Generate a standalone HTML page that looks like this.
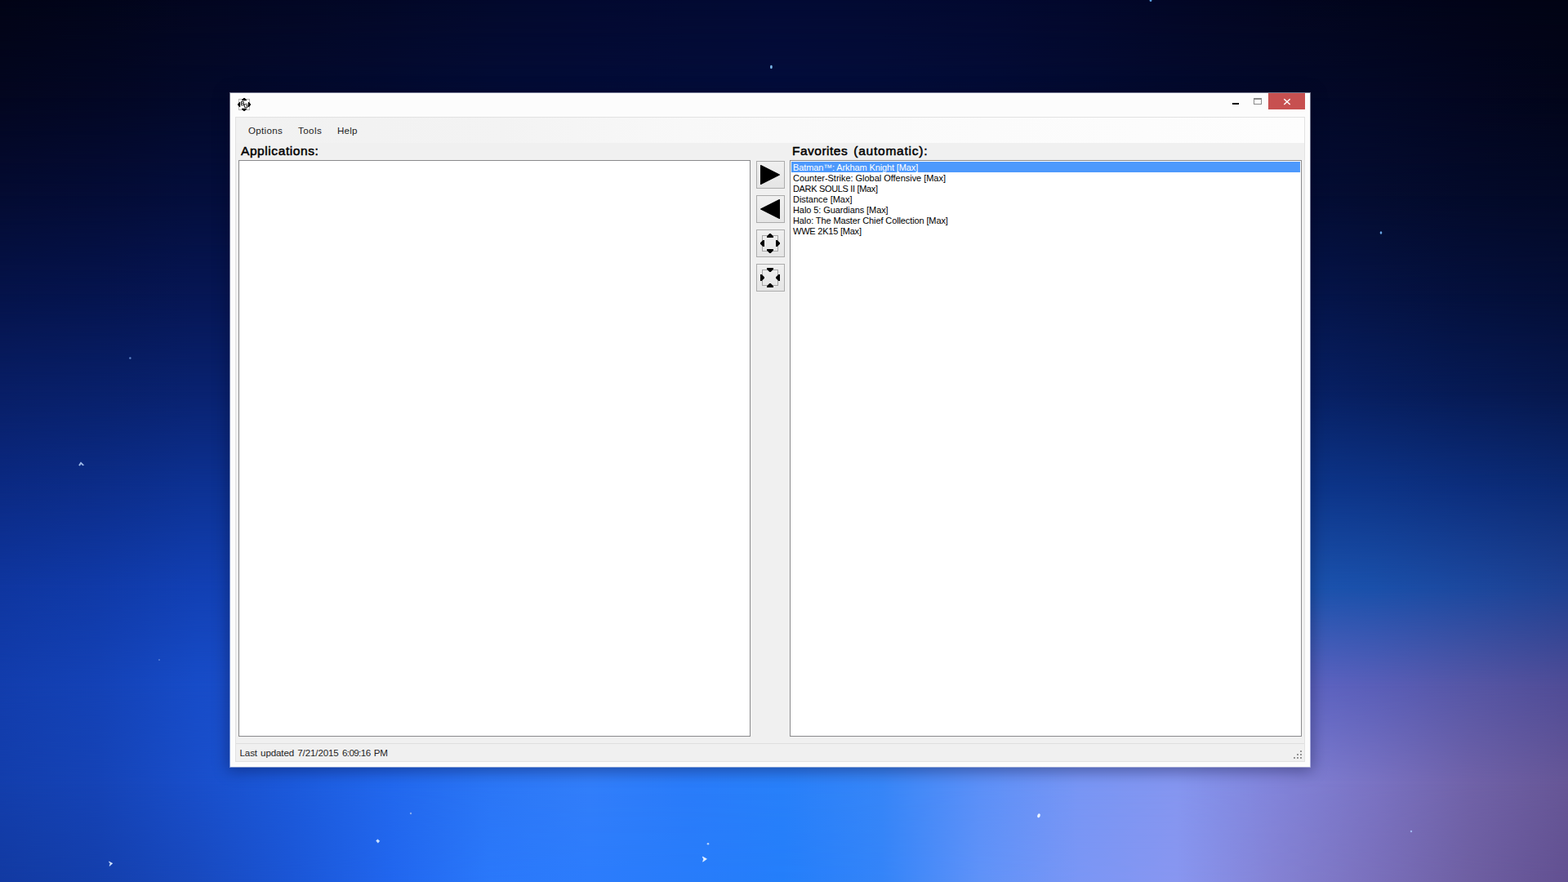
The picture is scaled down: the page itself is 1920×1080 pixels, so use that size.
<!DOCTYPE html>
<html lang="en">
<head>
<meta charset="utf-8">
<title>Borderless Gaming</title>
<style>
*{box-sizing:border-box;margin:0;padding:0}
html,body{width:1920px;height:1080px;overflow:hidden;background:#06154a}
body{position:relative;font-family:"Liberation Sans",sans-serif;color:#000;-webkit-font-smoothing:antialiased}
#desk{position:absolute;left:0;top:0;width:1920px;height:1080px;overflow:hidden;background:#0a2a7a}
.bg{position:absolute;left:0;width:1920px}
.abs{position:absolute}
#win{position:absolute;left:281px;top:113px;width:1324px;height:826px;
 box-shadow:0 3px 17px 2px rgba(0,4,30,.34)}
#win::before{content:"";position:absolute;left:1px;top:1px;right:1px;bottom:0;background:#fcfcfc;box-shadow:0 0 0 1px rgba(225,228,240,.5)}
#client{position:absolute;left:7px;top:30px;width:1310px;height:790px;background:#f0f0f0;border:1px solid #e2e2e2}
#menubar{position:absolute;left:0;top:0;width:1308px;height:31px;background:linear-gradient(90deg,#f1f1f1 0%,#f3f3f3 25%,#f8f8f8 42%,#fbfbfb 70%,#fdfdfd 100%)}
.mi{position:absolute;top:9px;font-size:11.6px;line-height:14px;color:#1c1c1c;white-space:pre}
.hdr{position:absolute;font-weight:400;-webkit-text-stroke:.5px #000;font-size:15.5px;line-height:17px;white-space:pre;color:#000}
.lb{position:absolute;background:#fff;border:1px solid #8a8a8c}
.row{position:absolute;left:1px;height:13px;width:623px;font-size:11px;line-height:13px;white-space:pre;padding-left:2px;color:#000;overflow:visible}
.row span{position:relative;top:1px}
.row.sel{background:#4d99fc;color:#fff}
.btn{position:absolute;width:35px;height:34px;border:1px solid #acacac;background:linear-gradient(180deg,#f0f0f0 0%,#e5e5e5 100%)}
.btn svg{position:absolute;left:4px;top:4px;width:24px;height:24px;display:block}
#status{position:absolute;left:0;top:766px;width:1308px;height:22px;border-top:1px solid #dfdfdf;background:#f0f0f0}
#stext{position:absolute;left:4.5px;top:4px;font-size:11.6px;line-height:14px;letter-spacing:-0.13px;word-spacing:1.1px;white-space:pre;color:#1e1e1e}
</style>
</head>
<body>
<div id="desk">
<div class="bg" style="top:0;height:1080px;background:linear-gradient(90deg,#020416 0%,#02051a 6.25%,#030620 12.5%,#030724 18.75%,#030828 25%,#03092c 31.25%,#030930 37.5%,#030a32 43.75%,#030a34 50%,#030a32 56.25%,#030930 62.5%,#03082c 68.75%,#030726 75%,#030620 81.25%,#02051c 87.5%,#020418 93.75%,#020414 100%)"></div>
<div class="bg" style="top:0px;height:1080px;background:linear-gradient(90deg,#030620 0%,#030724 6.25%,#03092a 12.5%,#030a2e 18.75%,#030b32 25%,#030c36 31.25%,#030c38 37.5%,#030d3a 43.75%,#030d3c 50%,#030d3a 56.25%,#030c37 62.5%,#030b32 68.75%,#030a2e 75%,#03092a 81.25%,#030826 87.5%,#030620 93.75%,#02051a 100%);-webkit-mask-image:linear-gradient(180deg,transparent 0,#000 120px);mask-image:linear-gradient(180deg,transparent 0,#000 120px)"></div>
<div class="bg" style="top:120px;height:960px;background:linear-gradient(90deg,#040b32 0%,#040c36 6.25%,#040e3c 12.5%,#040e3b 18.75%,#040e3b 25%,#040e3a 31.25%,#040e3a 37.5%,#040e39 43.75%,#040d39 50%,#040d38 56.25%,#040d38 62.5%,#040d37 68.75%,#040d37 75%,#040d36 81.25%,#040c30 87.5%,#030a2a 93.75%,#030926 100%);-webkit-mask-image:linear-gradient(180deg,transparent 0,#000 120px);mask-image:linear-gradient(180deg,transparent 0,#000 120px)"></div>
<div class="bg" style="top:240px;height:840px;background:linear-gradient(90deg,#05134a 0%,#05144e 6.25%,#061654 12.5%,#061653 18.75%,#061653 25%,#061652 31.25%,#061651 37.5%,#061650 43.75%,#051550 50%,#05154f 56.25%,#05154e 62.5%,#05154d 68.75%,#05154d 75%,#05154c 81.25%,#051344 87.5%,#04103c 93.75%,#040e36 100%);-webkit-mask-image:linear-gradient(180deg,transparent 0,#000 120px);mask-image:linear-gradient(180deg,transparent 0,#000 120px)"></div>
<div class="bg" style="top:360px;height:720px;background:linear-gradient(90deg,#081e66 0%,#08206a 6.25%,#092270 12.5%,#09226f 18.75%,#09226f 25%,#09226e 31.25%,#09226d 37.5%,#09226c 43.75%,#08226c 50%,#08226b 56.25%,#08226a 62.5%,#082269 68.75%,#082269 75%,#082268 81.25%,#071e5e 87.5%,#061a54 93.75%,#06174c 100%);-webkit-mask-image:linear-gradient(180deg,transparent 0,#000 120px);mask-image:linear-gradient(180deg,transparent 0,#000 120px)"></div>
<div class="bg" style="top:480px;height:600px;background:linear-gradient(90deg,#0b2a84 0%,#0c2d8a 6.25%,#0d3294 12.5%,#0d3293 18.75%,#0d3393 25%,#0d3392 31.25%,#0d3491 37.5%,#0d3491 43.75%,#0d3590 50%,#0d3590 56.25%,#0d368f 62.5%,#0d368e 68.75%,#0d378e 75%,#0d378d 81.25%,#0d3487 87.5%,#0c2e7d 93.75%,#0b2a73 100%);-webkit-mask-image:linear-gradient(180deg,transparent 0,#000 120px);mask-image:linear-gradient(180deg,transparent 0,#000 120px)"></div>
<div class="bg" style="top:600px;height:480px;background:linear-gradient(90deg,#0f36a0 0%,#103aa8 6.25%,#1240b4 12.5%,#1342b4 18.75%,#1444b3 25%,#1545b3 31.25%,#1647b3 37.5%,#1749b2 43.75%,#174bb2 50%,#184db1 56.25%,#194fb1 62.5%,#1a50b1 68.75%,#1b52b0 75%,#1c54b0 81.25%,#1a50aa 87.5%,#1c489e 93.75%,#1e4091 100%);-webkit-mask-image:linear-gradient(180deg,transparent 0,#000 120px);mask-image:linear-gradient(180deg,transparent 0,#000 120px)"></div>
<div class="bg" style="top:720px;height:360px;background:linear-gradient(90deg,#123dad 0%,#1442b6 6.25%,#174cc8 12.5%,#1e4ec8 18.75%,#2451c8 25%,#2b53c7 31.25%,#3155c7 37.5%,#3858c7 43.75%,#3e5ac7 50%,#455dc7 56.25%,#4b5fc7 62.5%,#5261c6 68.75%,#5864c6 75%,#5f66c6 81.25%,#5a5fb9 87.5%,#5656a5 93.75%,#504c96 100%);-webkit-mask-image:linear-gradient(180deg,transparent 0,#000 120px);mask-image:linear-gradient(180deg,transparent 0,#000 120px)"></div>
<div class="bg" style="top:840px;height:240px;background:linear-gradient(90deg,#133eac 0%,#1543b6 6.25%,#194eca 12.5%,#1c5adc 18.75%,#2268ee 25%,#2b76f6 31.25%,#327efa 37.5%,#2a7cfa 43.75%,#2880fa 50%,#3786f8 56.25%,#5c90f8 62.5%,#7896f5 68.75%,#8596f0 75%,#8284da 81.25%,#7a73c3 87.5%,#7062a8 93.75%,#665696 100%);-webkit-mask-image:linear-gradient(180deg,transparent 0,#000 120px);mask-image:linear-gradient(180deg,transparent 0,#000 120px)"></div>
<div class="bg" style="top:960px;height:120px;background:linear-gradient(90deg,#123aa2 0%,#143fac 6.25%,#1849be 12.5%,#1b56d6 18.75%,#2166ee 25%,#2a78fa 31.25%,#2c7cfc 37.5%,#287cfa 43.75%,#247efa 50%,#3484f8 56.25%,#5f92f8 62.5%,#7a96f5 68.75%,#8896f0 75%,#8482d4 81.25%,#7a70bc 87.5%,#6e5fa2 93.75%,#625091 100%);-webkit-mask-image:linear-gradient(180deg,transparent 0,#000 120px);mask-image:linear-gradient(180deg,transparent 0,#000 120px)"></div>
<svg class="abs" style="left:0;top:0;filter:blur(.5px)" width="1920" height="1080" viewBox="0 0 1920 1080">
<g>
<ellipse cx="944.4" cy="82" rx="1.4" ry="2.3" fill="#7ab6e8"/>
<ellipse cx="1409" cy="0.4" rx="1.4" ry="1.6" fill="#5aa0e0"/>
<ellipse cx="1691" cy="285" rx="1.3" ry="1.8" fill="#6aa8e8"/>
<ellipse cx="159.4" cy="438.5" rx="1.2" ry="1.3" fill="#6288cc"/>
<path d="M96.6 569.6 L99 565.8 L102.6 569.4 L101.4 570 L99.2 567.8 L97.8 570.2 Z" fill="#a8c4ee" stroke="#a8c4ee" stroke-width=".6"/>
<circle cx="195" cy="808" r="0.9" fill="#5f86d8"/>
<circle cx="503" cy="996" r="1.2" fill="#86acee"/>
<path d="M460.6 1029.6 L462.4 1027.8 L464.8 1029.8 L462.8 1032.2 Z" fill="#cfe4ff" stroke="#cfe4ff" stroke-width=".5"/>
<path d="M133.4 1055 L137.8 1057.2 L134 1060.4 L135 1057.6 Z" fill="#d6e8ff" stroke="#d6e8ff" stroke-width=".6"/>
<circle cx="867" cy="1033.3" r="1.3" fill="#b8d4fa"/>
<path d="M860.2 1049 L865.4 1051.8 L860.6 1055.2 L861.6 1052 Z" fill="#e8f2ff" stroke="#e8f2ff" stroke-width=".7"/>
<ellipse cx="1272" cy="998.7" rx="1.7" ry="2.6" fill="#eef6ff" transform="rotate(18 1272 998.7)"/>
<circle cx="1728" cy="1018" r="1.2" fill="#a0b8f0"/>
</g>
</svg>

</div>
<div id="win">
 <!-- app icon -->
 <svg class="abs" style="left:10px;top:7px;will-change:transform" width="16" height="16" viewBox="0 0 16 16">
  <rect x="1.5" y="1.5" width="13" height="13" fill="#fff" stroke="#b4b4b4" stroke-width="1"/>
  <path d="M7.4 0 H8.6 L11 2.2 V3.2 H5 V2.2 Z M7.4 16 H8.6 L11 13.8 V12.8 H5 V13.8 Z M0 7.4 V8.6 L2.2 11 H3.2 V5 H2.2 Z M16 7.4 V8.6 L13.8 11 H12.8 V5 H13.8 Z" fill="#000"/>
  <text x="3.7" y="9" font-family="Liberation Sans, sans-serif" font-size="6.8" fill="#000" stroke="#000" stroke-width=".25">B</text>
  <text x="7.6" y="11.8" font-family="Liberation Sans, sans-serif" font-size="6.8" fill="#000" stroke="#000" stroke-width=".25">G</text>
 </svg>
 <!-- caption buttons -->
 <div class="abs" style="left:1228px;top:13px;width:8px;height:2px;background:#000"></div>
 <div class="abs" style="left:1254px;top:7px;width:10px;height:8px;border:1px solid #8a8a8a;border-top-width:2px"></div>
 <div class="abs" style="left:1272px;top:1px;width:45px;height:20px;background:#c75050">
  <svg class="abs" style="left:18px;top:6px" width="10" height="9" viewBox="0 0 10 9"><path d="M1.3 1.2 L8.7 8 M8.7 1.2 L1.3 8" stroke="#fff" stroke-width="1.45" fill="none"/></svg>
 </div>
 <div id="client">
  <div id="menubar">
   <span class="mi" style="left:15px;letter-spacing:.3px">Options</span>
   <span class="mi" style="left:76px;letter-spacing:.42px">Tools</span>
   <span class="mi" style="left:124px;letter-spacing:.2px">Help</span>
  </div>
  <span class="hdr" style="left:6px;top:32px;letter-spacing:.58px">Applications:</span>
  <span class="hdr" style="left:681px;top:32px;letter-spacing:.5px;word-spacing:2.2px">Favorites <span style="letter-spacing:.76px">(automatic):</span></span>
  <div class="lb" style="left:3px;top:52px;width:627px;height:706px"></div>
  <div class="btn" style="left:637px;top:53px"><svg viewBox="0 0 24 24"><path d="M.6 .6 L23.4 12 L.6 23.4 Z" fill="#000" stroke="#000" stroke-width="1.2" stroke-linejoin="round"/></svg></div>
  <div class="btn" style="left:637px;top:95px"><svg viewBox="0 0 24 24"><path d="M23.4 .6 L.6 12 L23.4 23.4 Z" fill="#000" stroke="#000" stroke-width="1.2" stroke-linejoin="round"/></svg></div>
  <div class="btn" style="left:637px;top:137px"><svg viewBox="0 0 24 24"><rect x="2.5" y="2.5" width="19" height="19" fill="none" stroke="#a6a6a6"/><path d="M11.3 0 H12.7 L16 3.3 V5 H8 V3.3 Z M11.3 24 H12.7 L16 20.7 V19 H8 V20.7 Z M0 11.3 V12.7 L3.3 16 H5 V8 H3.3 Z M24 11.3 V12.7 L20.7 16 H19 V8 H20.7 Z" fill="#000"/></svg></div>
  <div class="btn" style="left:637px;top:179px"><svg viewBox="0 0 24 24"><rect x="2.5" y="2.5" width="19" height="19" fill="none" stroke="#a6a6a6"/><path d="M11.3 5 H12.7 L16 1.7 V0 H8 V1.7 Z M11.3 19 H12.7 L16 22.3 V24 H8 V22.3 Z M5 11.3 V12.7 L1.7 16 H0 V8 H1.7 Z M19 11.3 V12.7 L22.3 16 H24 V8 H22.3 Z" fill="#000"/></svg></div>
  <div class="lb" style="left:678px;top:52px;width:627px;height:706px">
   <div class="row sel" style="top:1px;letter-spacing:-.12px"><span>Batman™: Arkham Knight [Max]</span></div>
   <div class="row" style="top:14px;letter-spacing:-.03px"><span>Counter-Strike: Global Offensive [Max]</span></div>
   <div class="row" style="top:27px;letter-spacing:-.33px"><span>DARK SOULS II [Max]</span></div>
   <div class="row" style="top:40px;letter-spacing:-.02px"><span>Distance [Max]</span></div>
   <div class="row" style="top:53px;letter-spacing:-.09px"><span>Halo 5: Guardians [Max]</span></div>
   <div class="row" style="top:66px;letter-spacing:-.115px"><span>Halo: The Master Chief Collection [Max]</span></div>
   <div class="row" style="top:79px;letter-spacing:-.22px"><span>WWE 2K15 [Max]</span></div>
  </div>
  <div id="status"><span id="stext">Last updated 7/21/2015 <span style="letter-spacing:-.58px">6:09:16</span> PM</span>
   <svg class="abs" style="left:1295px;top:8px" width="12" height="12" viewBox="0 0 12 12"><path d="M8 0h2v2h-2z M4 4h2v2h-2z M8 4h2v2h-2z M0 8h2v2h-2z M4 8h2v2h-2z M8 8h2v2h-2z" fill="#949494"/></svg>
  </div>
 </div>
</div>
</body>
</html>
